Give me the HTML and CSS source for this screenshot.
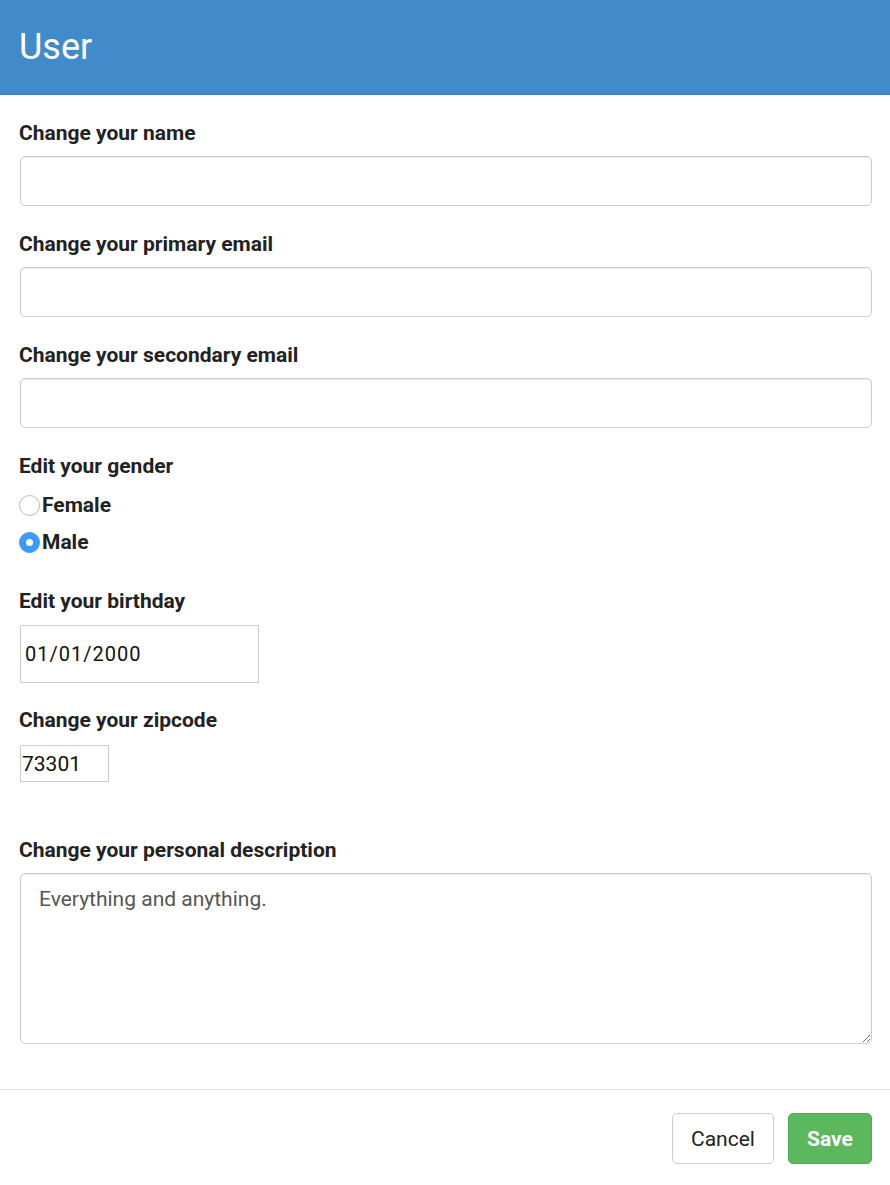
FILE: index.html
```html
<!DOCTYPE html>
<html>
<head>
<meta charset="utf-8">
<link rel="stylesheet" href="styles.css">
</head>
<body>
<div class="modal">
  <header class="modal-header">
    <h1 class="title">User</h1>
  </header>
  <form class="modal-body">
    <div class="group">
      <label class="label">Change your name</label>
      <input class="field" type="text">
    </div>
    <div class="group">
      <label class="label">Change your primary email</label>
      <input class="field" type="text">
    </div>
    <div class="group">
      <label class="label">Change your secondary email</label>
      <input class="field" type="text">
    </div>
    <div class="group gender">
      <label class="label">Edit your gender</label>
      <div class="radio-row"><span class="radio"></span><span class="radio-text">Female</span></div>
      <div class="radio-row"><span class="radio checked"></span><span class="radio-text">Male</span></div>
    </div>
    <div class="group birthday">
      <label class="label">Edit your birthday</label>
      <input class="date" type="text" value="01/01/2000">
    </div>
    <div class="group zip">
      <label class="label">Change your zipcode</label>
      <input class="zipcode" type="text" value="73301">
    </div>
    <div class="group desc">
      <label class="label">Change your personal description</label>
      <textarea class="area">Everything and anything.</textarea>
    </div>
  </form>
  <footer class="modal-footer">
    <button class="btn btn-default" type="button">Cancel</button>
    <button class="btn btn-save" type="button">Save</button>
  </footer>
</div>
</body>
</html>
```

FILE: styles.css
```css
* { box-sizing: border-box; }
html, body { margin: 0; padding: 0; background: #fff; }
body {
  font-family: Roboto, "Liberation Sans", Arial, sans-serif;
  color: #222;
  width: 890px;
}
.modal-header {
  background: #428bca;
  height: 95px;
  border-bottom: 1px solid #3c7fba;
  padding: 0 19px;
  display: flex;
  align-items: center;
}
.title {
  margin: 0;
  color: #fff;
  font-size: 36px;
  font-weight: 400;
  line-height: 1;
}
.modal-body {
  padding: 25px 18px 0 19px;
  margin: 0;
}
.group { margin-bottom: 25px; }
.label {
  display: block;
  font-size: 21px;
  font-weight: 700;
  line-height: 26px;
  margin-bottom: 10px;
  color: #222;
}
.field {
  display: block;
  width: 852px;
  height: 50px;
  margin-left: 1px;
  border: 1px solid #ccc;
  border-radius: 5px;
  box-shadow: inset 0 1px 1px rgba(0,0,0,0.075);
  font-family: inherit;
  font-size: 18px;
  padding: 6px 12px;
  outline: none;
}
.gender .label { margin-bottom: 13px; }
.radio-row {
  display: flex;
  align-items: center;
  height: 26px;
  margin-bottom: 11px;
}
.radio {
  width: 21px;
  height: 21px;
  border-radius: 50%;
  border: 1px solid #b9b9b9;
  background: #fff;
  margin-right: 2px;
  position: relative;
}
.radio.checked {
  background: #3b99fc;
  border-color: #3b99fc;
}
.radio.checked::after {
  content: "";
  position: absolute;
  left: 6px;
  top: 6px;
  width: 7px;
  height: 7px;
  border-radius: 50%;
  background: #fff;
}
.radio-text {
  font-size: 21px;
  font-weight: 700;
  color: #222;
}
.gender { margin-bottom: 33px; }
.birthday .label { margin-bottom: 11px; }
.date {
  display: block;
  width: 239px;
  height: 58px;
  margin-left: 1px;
  border: 1px solid #ccc;
  border-radius: 0;
  padding: 0 4px;
  font-family: inherit;
  font-size: 20px;
  letter-spacing: 1px;
  color: #111;
  outline: none;
}
.birthday { margin-bottom: 24px; }
.zip .label { margin-bottom: 12px; }
.zipcode {
  display: block;
  width: 89px;
  height: 37px;
  margin-left: 1px;
  border: 1px solid #ccc;
  border-radius: 0;
  padding: 0 1px;
  font-family: inherit;
  font-size: 21px;
  color: #111;
  outline: none;
}
.zip { margin-bottom: 55px; }
.area {
  display: block;
  width: 852px;
  height: 171px;
  margin-left: 1px;
  border: 1px solid #ccc;
  border-radius: 5px;
  box-shadow: inset 0 1px 1px rgba(0,0,0,0.075);
  padding: 12px 18px;
  font-family: inherit;
  font-size: 21px;
  line-height: 26px;
  color: #555;
  resize: vertical;
  outline: none;
}
.desc { margin-bottom: 45px; }
.modal-footer {
  border-top: 1px solid #e5e5e5;
  padding: 23px 18px 21px 19px;
  display: flex;
  justify-content: flex-end;
  gap: 14px;
}
.btn {
  height: 51px;
  border-radius: 5px;
  font-family: inherit;
  font-size: 21px;
  padding: 0;
  cursor: pointer;
}
.btn-default {
  width: 102px;
  background: #fff;
  border: 1px solid #ccc;
  color: #222;
  font-weight: 400;
}
.btn-save {
  width: 84px;
  background: #5cb85c;
  border: 1px solid #4cae4c;
  color: #fff;
  font-weight: 700;
}
```
